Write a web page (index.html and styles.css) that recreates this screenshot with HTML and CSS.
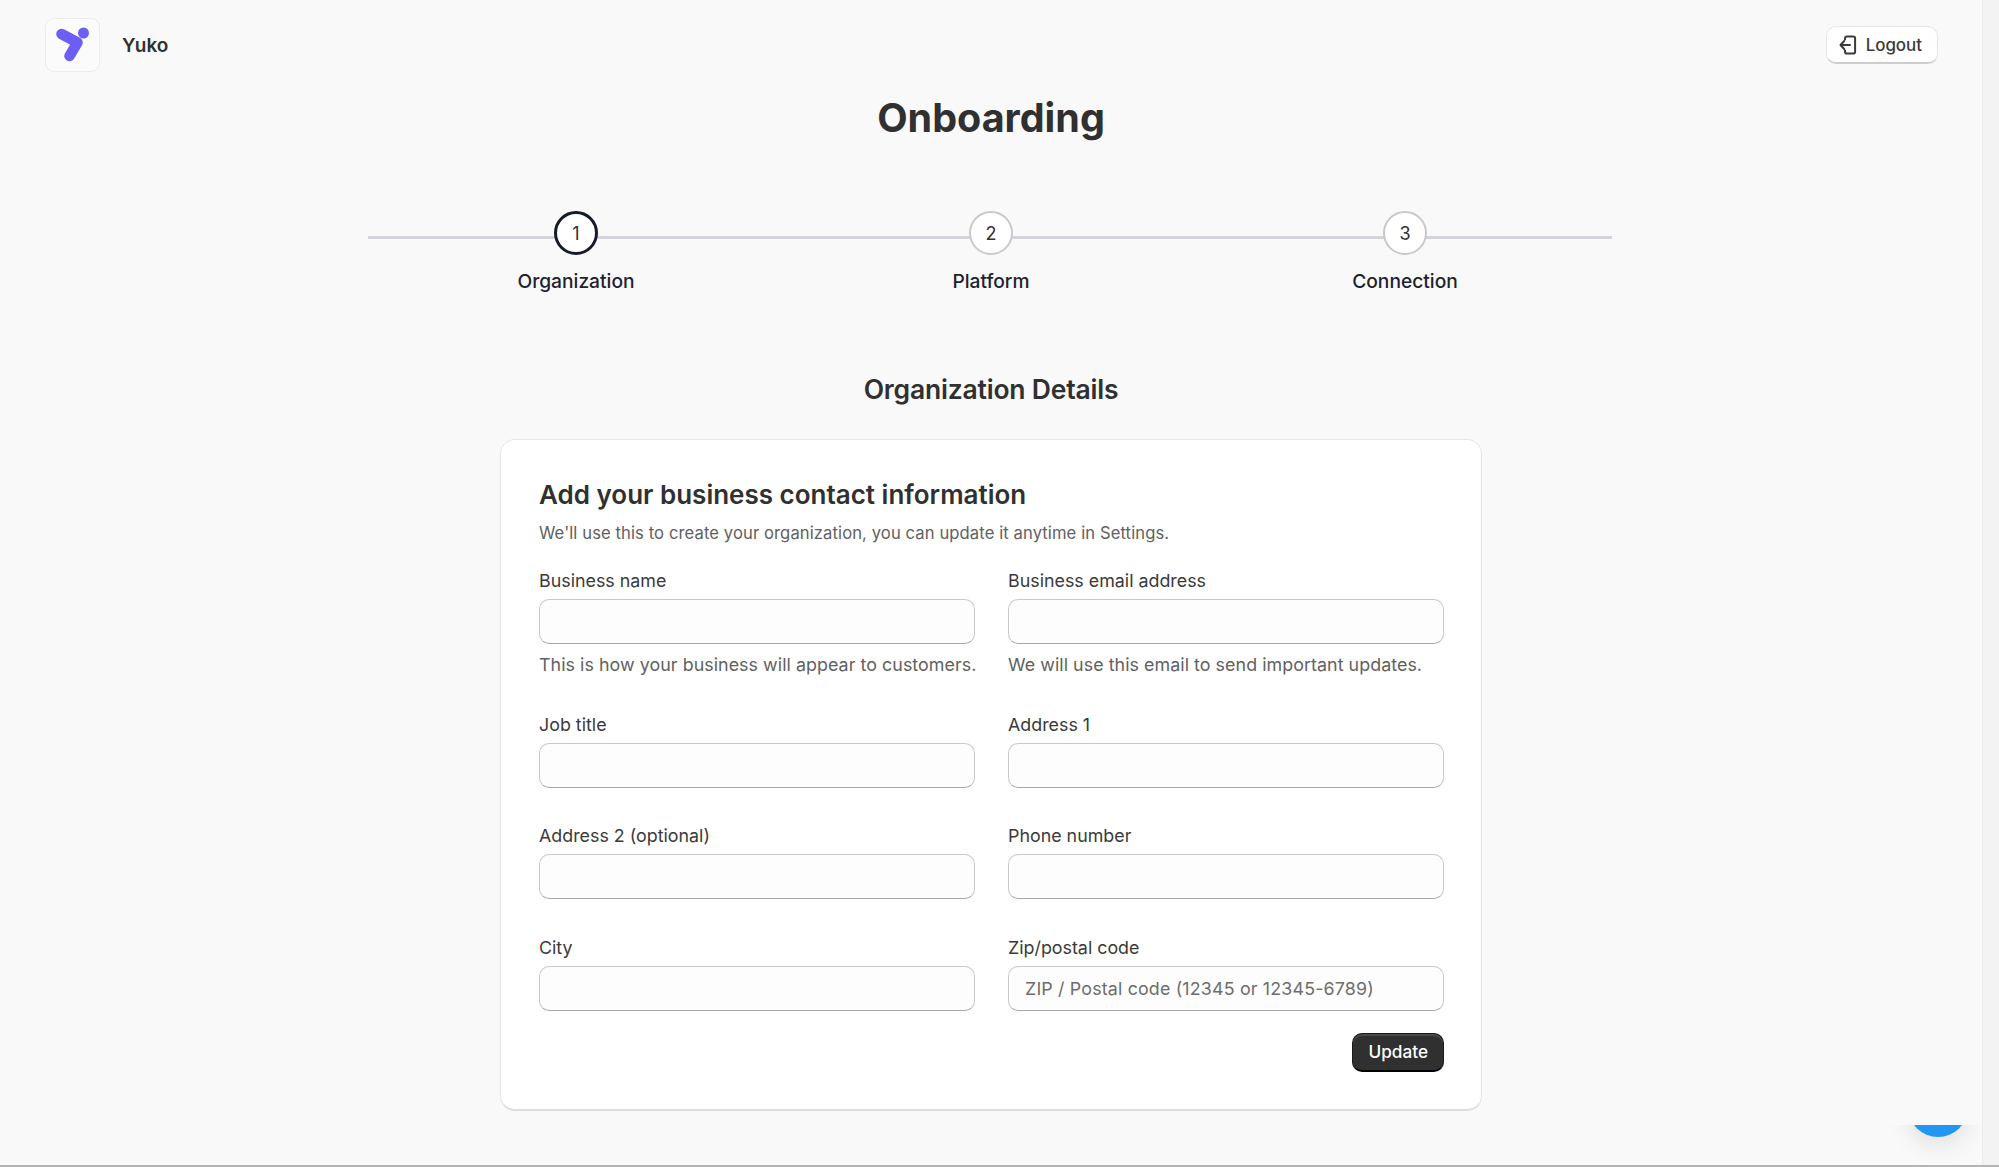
FILE: index.html
```html
<!DOCTYPE html>
<html lang="en">
<head>
  <meta charset="UTF-8" />
  <title>Onboarding</title>
  <link rel="stylesheet" href="styles.css">
</head>
<body>
  <div class="page">
    <header class="topbar">
      <div class="brand">
        <div class="logo">
          <svg width="36" height="36" viewBox="0 0 36 36">
            <path d="M6.5 7 L22.5 15.5 L14.5 29" fill="none" stroke="#6c5ef5" stroke-width="10.5" stroke-linecap="round" stroke-linejoin="round"/>
            <circle cx="28.5" cy="6" r="5.5" fill="#6c5ef5"/>
          </svg>
        </div>
        <span class="brand-name">Yuko</span>
      </div>
      <button class="logout" type="button">
        <svg width="18" height="20" viewBox="0 0 18 20" fill="none" stroke="#3a3a3a" stroke-width="2" stroke-linecap="round" stroke-linejoin="round">
          <path d="M6 4.5V3.2C6 2.2 6.8 1.4 7.8 1.4H14.2C15.3 1.4 16.1 2.2 16.1 3.2V16.8C16.1 17.8 15.3 18.6 14.2 18.6H7.8C6.8 18.6 6 17.8 6 16.8V15.5"/>
          <path d="M11 10H1.5M5.2 6L1.5 10L5.2 14"/>
        </svg>
        Logout
      </button>
    </header>

    <h1>Onboarding</h1>

    <ol class="stepper">
      <li class="step active"><span class="step-num">1</span><span class="step-label">Organization</span></li>
      <li class="step"><span class="step-num">2</span><span class="step-label">Platform</span></li>
      <li class="step"><span class="step-num">3</span><span class="step-label">Connection</span></li>
    </ol>

    <h2>Organization Details</h2>

    <form class="card">
      <h3>Add your business contact information</h3>
      <p class="card-sub">We'll use this to create your organization, you can update it anytime in Settings.</p>
      <div class="fields">
        <div class="field has-help">
          <label>Business name</label>
          <input type="text" />
          <p class="help">This is how your business will appear to customers.</p>
        </div>
        <div class="field has-help">
          <label>Business email address</label>
          <input type="text" />
          <p class="help">We will use this email to send important updates.</p>
        </div>
        <div class="field">
          <label>Job title</label>
          <input type="text" />
        </div>
        <div class="field">
          <label>Address 1</label>
          <input type="text" />
        </div>
        <div class="field">
          <label>Address 2 (optional)</label>
          <input type="text" />
        </div>
        <div class="field">
          <label>Phone number</label>
          <input type="text" />
        </div>
        <div class="field">
          <label>City</label>
          <input type="text" />
        </div>
        <div class="field">
          <label>Zip/postal code</label>
          <input type="text" placeholder="ZIP / Postal code (12345 or 12345-6789)" />
        </div>
      </div>
      <div class="actions">
        <button class="update" type="submit">Update</button>
      </div>
    </form>
  </div>
  <div class="scroll-track"></div>
  <div class="chat-bubble"></div>
  <div class="bottom-strip"></div>
</body>
</html>
```

FILE: styles.css
```css
:root {
  --bg: #f9f9f9;
  --text-dark: #303030;
  --text-muted: #616161;
  --border: #c9c9c9;
}

* {
  box-sizing: border-box;
}

html, body {
  height: 100%;
}

body {
  margin: 0;
  font-family: Inter, "Liberation Sans", sans-serif;
  background: var(--bg);
  color: var(--text-dark);
  overflow: hidden;
  position: relative;
}

.page {
  width: 1982px;
  height: 1125px;
  background: var(--bg);
  position: relative;
  z-index: 2;
  overflow: hidden;
}

.topbar {
  display: flex;
  justify-content: space-between;
  align-items: center;
  padding: 18px 44px 0 45px;
}

.brand {
  display: flex;
  align-items: center;
  gap: 22px;
}

.logo {
  width: 55px;
  height: 54px;
  display: flex;
  align-items: center;
  justify-content: center;
  border: 1px solid #ececec;
  border-radius: 9px;
  background: #fbfbfb;
}

.brand-name {
  font-size: 19px;
  font-weight: 600;
}

.logout {
  display: flex;
  align-items: center;
  gap: 9px;
  height: 38px;
  padding: 0 15px 0 12px;
  background: #fff;
  border: 1px solid #e6e6e6;
  border-bottom: 2px solid #cfcfcf;
  border-radius: 10px;
  font: 500 16.9px Inter, sans-serif;
  color: #3a3a3a;
}

h1 {
  margin: 22px 0 0;
  text-align: center;
  font-size: 39.5px;
  line-height: 48px;
  font-weight: 700;
}

.stepper {
  list-style: none;
  width: 1244px;
  margin: 69px auto 0 368px;
  padding: 0;
  display: grid;
  grid-template-columns: 416px 414px 414px;
  background: linear-gradient(#d3d5da, #d3d5da) no-repeat 0 25px / 100% 3px;
}

.step {
  display: flex;
  flex-direction: column;
  align-items: center;
}

.step-num {
  width: 44px;
  height: 44px;
  border: 2px solid #c9c9c9;
  border-radius: 50%;
  background: #fff;
  display: flex;
  align-items: center;
  justify-content: center;
  font-size: 18px;
  color: #303030;
}

.step.active .step-num {
  border: 3px solid #151b2b;
}

.step-label {
  margin-top: 14px;
  font-size: 19.2px;
  line-height: 24px;
  font-weight: 500;
  color: #1d2230;
}

h2 {
  margin: 79px 0 0;
  text-align: center;
  font-size: 26.5px;
  line-height: 34px;
  font-weight: 600;
  letter-spacing: -0.2px;
}

.card {
  width: 982px;
  margin: 33px 0 0 500px;
  padding: 39px 37px 37px 38px;
  background: #fff;
  border: 1px solid #e6e6e6;
  border-bottom: 2px solid #dcdcdc;
  border-radius: 15px;
}

h3 {
  margin: 0;
  font-size: 26px;
  line-height: 32px;
  font-weight: 600;
}

.card-sub {
  margin: 12px 0 0;
  font-size: 16.6px;
  line-height: 20px;
  letter-spacing: 0.1px;
  color: var(--text-muted);
}

.fields {
  display: grid;
  grid-template-columns: 436px 436px;
  column-gap: 33px;
  row-gap: 37.5px;
  margin-top: 27px;
}

.field label {
  display: block;
  font-size: 17.85px;
  line-height: 22px;
  font-weight: 400;
  color: #3a3a3a;
}

.field input {
  display: block;
  width: 100%;
  height: 45px;
  margin-top: 7px;
  padding: 0 16px;
  background: #fdfdfd;
  border: 1px solid var(--border);
  border-bottom-color: #a8a8a8;
  border-radius: 10px;
  font: 17.85px Inter, sans-serif;
  letter-spacing: 0.16px;
}

.field input::placeholder {
  color: #6d6d6d;
}

.help {
  margin: 10px 0 0;
  font-size: 17.85px;
  line-height: 22px;
  letter-spacing: 0.05px;
  white-space: nowrap;
  color: var(--text-muted);
}

.actions {
  display: flex;
  justify-content: flex-end;
  margin-top: 22px;
}

.update {
  height: 39px;
  padding: 0 15px;
  background: #303030;
  border: 1px solid #1a1a1a;
  border-bottom: 2px solid #000;
  border-radius: 10px;
  box-shadow: inset 0 2px 0 #4a4a4a;
  color: #fff;
  font: 500 17.2px Inter, sans-serif;
}

.scroll-track {
  position: absolute;
  top: 0;
  right: 0;
  width: 17px;
  height: 100%;
  background: #f3f3f3;
  border-left: 1px solid #ececec;
  z-index: 3;
}

.chat-bubble {
  position: absolute;
  left: 1908px;
  top: 1077px;
  width: 60px;
  height: 60px;
  border-radius: 50%;
  background: #2196f3;
  box-shadow: 0 8px 24px rgba(0,0,0,0.10);
  z-index: 1;
}

.bottom-strip {
  position: absolute;
  left: 0;
  right: 0;
  bottom: 0;
  height: 2px;
  background: #b5b5b5;
  z-index: 4;
}
```
